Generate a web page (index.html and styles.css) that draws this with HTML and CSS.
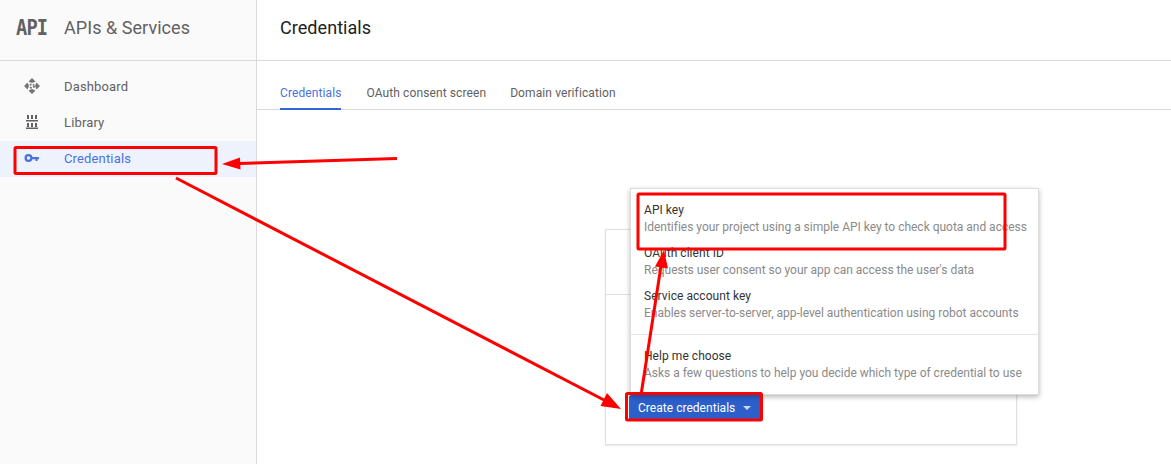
FILE: index.html
```html
<!DOCTYPE html>
<html lang="en">
<head>
<meta charset="utf-8">
<title>Credentials</title>
<link rel="stylesheet" href="styles.css">
</head>
<body>
<div class="app">
  <aside class="sidebar">
    <div class="brand">
      <span class="brand-logo">API</span>
      <span class="brand-name">APIs &amp; Services</span>
    </div>
    <nav class="nav">
      <a class="nav-item">
        <svg class="nav-icon" viewBox="0 0 18 18"><path fill="#757575" d="M9 1 12.500 4.500 9 6 5.500 4.500ZM9 17 5.500 13.500 9 12 12.500 13.500ZM1 9 4.500 5.500 6 9 4.500 12.500ZM17 9 13.500 12.500 12 9 13.500 5.500Z"/><circle cx="9" cy="9" r="2" fill="none" stroke="#757575" stroke-width="2" stroke-dasharray="1.600 1.540"/></svg>
        <span>Dashboard</span>
      </a>
      <a class="nav-item">
        <svg class="nav-icon" viewBox="0 0 18 18"><path fill="#616161" d="M4 2h2v4H4zM8 2h2v4H8zM12 2h2v4h-2zM3 7h12v1.500H3zM4 10h2v4H4zM8 10h2v4H8zM12 10h2v4h-2zM3 14.500h12V16H3z"/></svg>
        <span>Library</span>
      </a>
      <a class="nav-item active">
        <svg class="nav-icon" viewBox="0 0 18 18"><path fill="#4a72dc" d="M5.500 5a4 4 0 1 1-.001 8 4 4 0 0 1 .001-8Zm0 2.200a1.800 1.800 0 1 0 .001 3.600 1.800 1.800 0 0 0-.001-3.600ZM9 8h7v2.200h-1.500V12h-2v-1.800H9Z"/></svg>
        <span>Credentials</span>
      </a>
    </nav>
  </aside>
  <main class="main">
    <header class="page-head"><h1>Credentials</h1></header>
    <div class="tabs">
      <a class="tab active">Credentials</a>
      <a class="tab">OAuth consent screen</a>
      <a class="tab">Domain verification</a>
    </div>
    <section class="card">
      <div class="card-top"></div>
      <div class="card-body">
        <button class="create" type="button">Create credentials<span class="caret"></span></button>
      </div>
    </section>
    <div class="menu">
      <div class="menu-group">
        <div class="menu-item"><div class="menu-title">API key</div><div class="menu-desc">Identifies your project using a simple API key to check quota and access</div></div>
        <div class="menu-item"><div class="menu-title">OAuth client ID</div><div class="menu-desc">Requests user consent so your app can access the user's data</div></div>
        <div class="menu-item"><div class="menu-title">Service account key</div><div class="menu-desc">Enables server-to-server, app-level authentication using robot accounts</div></div>
      </div>
      <div class="menu-group last">
        <div class="menu-item"><div class="menu-title">Help me choose</div><div class="menu-desc">Asks a few questions to help you decide which type of credential to use</div></div>
      </div>
    </div>
  </main>
  <svg class="marks" viewBox="0 0 1171 464" width="1171" height="464">
    <g fill="none" stroke="#f00" stroke-width="3">
      <rect x="15" y="147.500" width="201" height="26" rx="1"/>
      <rect x="638" y="194" width="367" height="55" rx="1"/>
      <rect x="626.500" y="393.500" width="135" height="26.500" rx="1"/>
    </g>
    <g stroke="#f00" stroke-width="3" fill="none">
      <path d="M397 158.500 238 163.500"/>
      <path d="M176 178 604 400"/>
      <path d="M641 395 661 266"/>
    </g>
    <g fill="#f00">
      <path d="M222 164 240 157.500 240.500 169.500Z"/>
      <path d="M621 409 600.500 406 607 393Z"/>
      <path d="M664 250 668 268.500 655 266.500Z"/>
    </g>
  </svg>
</div>
</body>
</html>
```
FILE: styles.css
```css
* { box-sizing: border-box; }
html, body { margin: 0; padding: 0; }
body {
  width: 1171px;
  height: 464px;
  overflow: hidden;
  background: #fff;
  font-family: Roboto, "Liberation Sans", sans-serif;
  color: #212121;
}
.app { position: relative; display: flex; width: 1171px; height: 464px; }
.sidebar {
  width: 257px;
  flex: none;
  background: #fafafa;
  border-right: 1px solid #dadada;
}
.brand {
  display: flex;
  align-items: center;
  height: 61px;
  padding: 0 0 5px 16px;
  border-bottom: 1px solid #dadada;
}
.brand-logo {
  width: 48px;
  font-family: "DejaVu Sans Mono", "Liberation Mono", monospace;
  font-weight: 700;
  font-size: 22px;
  letter-spacing: -1px;
  color: #616161;
  transform: scaleX(.85);
  transform-origin: left center;
}
.brand-name { font-size: 18px; letter-spacing: .05px; color: #616161; }
.nav { padding-top: 7px; display: flex; flex-direction: column; }
.nav-item {
  display: flex;
  align-items: center;
  height: 36px;
  padding-left: 23px;
  gap: 23px;
  font-size: 13px;
  letter-spacing: .15px;
  color: #616161;
}
.nav-item.active { background: #eef2fc; color: #4a72dc; margin-top: 1px; padding-bottom: 2px; }
.nav-icon { width: 18px; height: 18px; flex: none; }
.main { position: relative; flex: 1; min-width: 0; }
.page-head {
  display: flex;
  align-items: center;
  height: 61px;
  padding: 0 0 5px 23px;
  border-bottom: 1px solid #dadada;
}
.page-head h1 { margin: 0; font-size: 18px; letter-spacing: .05px; font-weight: 400; color: #212121; }
.tabs {
  display: flex;
  gap: 24px;
  height: 49px;
  padding: 0 0 0 23px;
  border-bottom: 1px solid #dadada;
}
.tab {
  display: flex;
  align-items: center;
  height: 49px;
  padding-top: 14px;
  font-size: 12px;
  letter-spacing: .1px;
  color: #616161;
}
.tab.active { color: #4a72dc; padding-top: 16px; margin-right: 1px; border-bottom: 2px solid #3367d6; }
.card {
  width: 412px;
  height: 216px;
  margin: 119px 0 0 348px;
  background: #fff;
  border: 1px solid #e0e0e0;
  box-shadow: 0 1px 2px rgba(0,0,0,.1);
}
.card-top { height: 65px; border-bottom: 1px solid #e0e0e0; }
.card-body { padding: 100px 0 0 23px; }
.create {
  display: flex;
  align-items: center;
  height: 26px;
  width: 133px;
  padding: 0 0 0 9px;
  border: 0;
  border-radius: 2px;
  background: #2d5fcb;
  color: #fff;
  font: 400 12px Roboto, "Liberation Sans", sans-serif;
  letter-spacing: .03px;
}
.caret {
  margin-left: 8px;
  border: 4px solid transparent;
  border-top: 4px solid #cfd9f3;
  border-bottom: 0;
}
.menu {
  position: absolute;
  left: 373px;
  top: 188px;
  width: 409px;
  height: 207px;
  background: #fff;
  border: 1px solid #dcdcdc;
  box-shadow: 0 2px 5px rgba(0,0,0,.28);
}
.menu-group { padding-top: 14px; border-bottom: 1px solid #e4e4e4; height: 146px; display: flex; flex-direction: column; gap: 11px; }
.menu-group.last { border-bottom: 0; height: auto; }
.menu-item { padding-left: 13px; display: flex; flex-direction: column; gap: 3px; }
.menu-title { font-size: 12px; line-height: 14px; letter-spacing: .05px; color: #333; }
.menu-desc { font-size: 12px; line-height: 15px; letter-spacing: -.015px; color: #8a8a8a; white-space: nowrap; }
.marks { position: absolute; left: 0; top: 0; pointer-events: none; }
```
